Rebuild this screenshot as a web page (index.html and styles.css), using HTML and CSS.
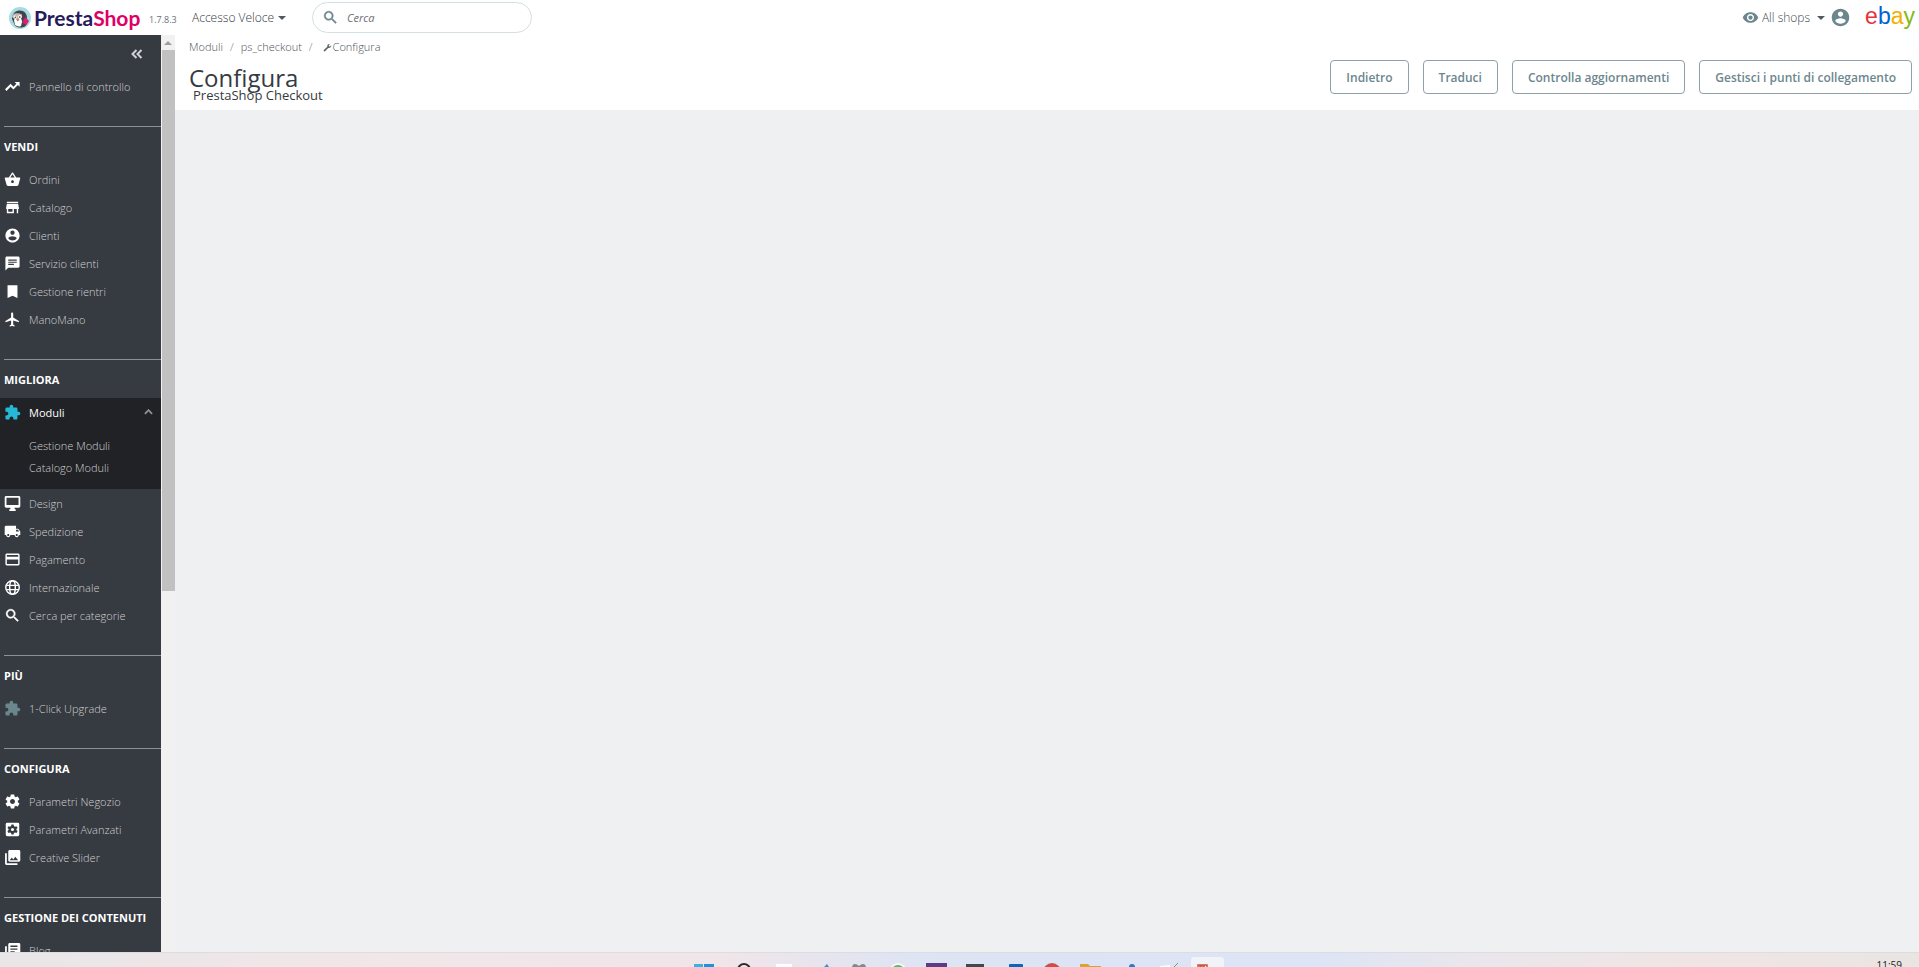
FILE: index.html
```html
<!DOCTYPE html>
<html lang="it">
<head>
<meta charset="utf-8">
<title>Configura - PrestaShop</title>
<link rel="stylesheet" href="styles.css">
</head>
<body>
<svg class="sprite" aria-hidden="true">
  <symbol id="trend" viewBox="0 0 24 24"><path d="M15 5.500l2.500 2.500-4.200 4.200-4-4L1.500 16l2 2.200 5.800-6 4 4 6.300-6.200 2.400 2.400V5.500z"/></symbol>
  <symbol id="basket" viewBox="0 0 24 24"><path d="M17.210 9l-4.380-6.560c-.19-.28-.51-.42-.83-.42-.32 0-.64.14-.83.43L6.790 9H2c-.55 0-1 .45-1 1 0 .09.010.18.040.27l2.540 9.270c.23.84 1 1.460 1.920 1.460h13c.92 0 1.690-.62 1.930-1.460l2.540-9.270L23 10c0-.55-.45-1-1-1h-4.790zM9 9l3-4.400L15 9H9zm3 8c-1.100 0-2-.9-2-2s.9-2 2-2 2 .9 2 2-.9 2-2 2z"/></symbol>
  <symbol id="store" viewBox="0 0 24 24"><path d="M20 4H4v2h16V4zm1 10v-2l-1-5H4l-1 5v2h1v6h10v-6h4v6h2v-6h1zm-9 4H6v-4h6v4z"/></symbol>
  <symbol id="person" viewBox="0 0 24 24"><path d="M12 2C6.480 2 2 6.480 2 12s4.480 10 10 10 10-4.480 10-10S17.520 2 12 2zm0 3c1.660 0 3 1.340 3 3s-1.340 3-3 3-3-1.340-3-3 1.340-3 3-3zm0 14.200c-2.500 0-4.710-1.280-6-3.220.03-1.990 4-3.080 6-3.080 1.990 0 5.970 1.090 6 3.080-1.290 1.940-3.500 3.220-6 3.220z"/></symbol>
  <symbol id="chat" viewBox="0 0 24 24"><path d="M20 2H4c-1.100 0-2 .9-2 2v18l4-4h14c1.100 0 2-.9 2-2V4c0-1.100-.9-2-2-2zM6 6.500h12V8H6V6.500zM6 9.500h12V11H6V9.500zm8 4.500H6v-1.500h8V14z"/></symbol>
  <symbol id="bookmark" viewBox="0 0 24 24"><path d="M19 3H5v18l7-3 7 3z"/></symbol>
  <symbol id="plane" viewBox="0 0 24 24"><path d="M21 16v-2l-8-5V3.500c0-.83-.67-1.500-1.500-1.500S10 2.670 10 3.500V9l-8 5v2l8-2.500V19l-2 1.500V22l3.500-1 3.500 1v-1.500L13 19v-5.500l8 2.500z"/></symbol>
  <symbol id="puzzle" viewBox="0 0 24 24"><path d="M20.500 11H19V7c0-1.100-.9-2-2-2h-4V3.500C13 2.120 11.880 1 10.500 1S8 2.120 8 3.500V5H4c-1.100 0-1.990.9-1.990 2v3.800H3.500c1.490 0 2.700 1.210 2.700 2.700s-1.210 2.700-2.700 2.700H2V20c0 1.100.9 2 2 2h3.800v-1.500c0-1.490 1.210-2.700 2.700-2.700 1.490 0 2.700 1.210 2.700 2.700V22H17c1.100 0 2-.9 2-2v-4h1.500c1.380 0 2.500-1.120 2.500-2.500S21.880 11 20.500 11z"/></symbol>
  <symbol id="monitor" viewBox="0 0 24 24"><path d="M21 1.500H3c-1.100 0-2 .9-2 2v12.500c0 1.100.9 2 2 2h6v2H7.500v2.500h9V20H15v-2h6c1.100 0 2-.9 2-2V3.500c0-1.100-.9-2-2-2zm-.500 12.500h-17V4h17v10z"/></symbol>
  <symbol id="truck" viewBox="0 0 24 24"><path d="M20 8h-3V4H3c-1.100 0-2 .9-2 2v11h2c0 1.660 1.340 3 3 3s3-1.340 3-3h6c0 1.660 1.340 3 3 3s3-1.340 3-3h2v-5l-3-4zM6 18.500c-.83 0-1.500-.67-1.500-1.500s.67-1.500 1.500-1.500 1.500.67 1.500 1.500-.67 1.500-1.500 1.500zm13.500-9l1.960 2.500H17V9.500h2.500zm-1.500 9c-.83 0-1.500-.67-1.500-1.500s.67-1.500 1.500-1.500 1.500.67 1.500 1.500-.67 1.500-1.500 1.500z"/></symbol>
  <symbol id="card" viewBox="0 0 24 24"><path d="M20 3.500H4c-1.110 0-1.990.89-1.990 2L2 18.500c0 1.110.89 2 2 2h16c1.110 0 2-.89 2-2v-13c0-1.110-.89-2-2-2zm0 15H4v-6.500h16v6.500zm0-10.500H4V5.500h16V8z"/></symbol>
  <symbol id="globe" viewBox="0 0 24 24"><g fill="none" stroke="currentColor" stroke-width="2"><circle cx="12" cy="12" r="9.500"/><ellipse cx="12" cy="12" rx="4" ry="9.500"/><path d="M3.500 9h17M3.500 15h17"/></g></symbol>
  <symbol id="search" viewBox="0 0 24 24"><path d="M15.500 14h-.79l-.28-.27C15.410 12.590 16 11.110 16 9.500 16 5.910 13.090 3 9.500 3S3 5.910 3 9.500 5.910 16 9.500 16c1.610 0 3.090-.59 4.230-1.570l.27.28v.79l5 4.990L20.490 19l-4.990-5zm-6 0C7.010 14 5 11.990 5 9.500S7.010 5 9.500 5 14 7.010 14 9.500 11.990 14 9.500 14z" stroke="currentColor" stroke-width=".6"/></symbol>
  <symbol id="gear" viewBox="0 0 24 24"><path d="M19.430 12.980c.04-.32.070-.64.070-.98s-.03-.66-.07-.98l2.110-1.650c.19-.15.240-.42.120-.64l-2-3.460c-.12-.22-.39-.3-.61-.22l-2.490 1c-.52-.4-1.080-.73-1.690-.98l-.38-2.650C14.460 2.180 14.250 2 14 2h-4c-.25 0-.46.18-.49.42l-.38 2.650c-.61.25-1.170.59-1.690.98l-2.490-1c-.23-.09-.49 0-.61.22l-2 3.460c-.13.22-.07.49.12.64l2.110 1.650c-.04.32-.07.65-.07.980s.03.66.07.98l-2.110 1.650c-.19.15-.24.42-.12.64l2 3.460c.12.22.39.3.61.22l2.490-1c.52.4 1.080.73 1.690.98l.38 2.650c.03.24.24.42.49.42h4c.25 0 .46-.18.490-.42l.38-2.650c.61-.25 1.170-.59 1.690-.98l2.490 1c.23.09.49 0 .61-.22l2-3.460c.12-.22.07-.49-.12-.64l-2.110-1.650zM12 15.500c-1.930 0-3.500-1.570-3.500-3.500s1.570-3.500 3.500-3.500 3.500 1.570 3.500 3.500-1.570 3.500-3.500 3.500z"/></symbol>
  <symbol id="gearbox" viewBox="0 0 24 24"><rect x="2.500" y="2.500" width="19" height="19" rx="2"/><path fill="#363a41" d="M10.500 5h3l.5 2.200 1.500.8 2.200-.7 1.500 2.600-1.700 1.500v1.300l1.700 1.500-1.500 2.600-2.200-.7-1.500.8-.5 2.100h-3l-.5-2.100-1.500-.8-2.200.7-1.500-2.600 1.700-1.500v-1.300L4.800 9.900l1.500-2.600 2.200.7 1.500-.8z"/><circle cx="12" cy="12" r="2.200"/></symbol>
  <symbol id="photos" viewBox="0 0 24 24"><path d="M23 16V3.500c0-1.100-.9-2-2-2H8c-1.100 0-2 .9-2 2V16c0 1.100.9 2 2 2h13c1.100 0 2-.9 2-2zm-12-4l2.030 2.710L16 11l4 5H8l3-4zM1.500 6v14.500c0 1.100.9 2 2 2H19V20H4V6H1.500z"/></symbol>
  <symbol id="library" viewBox="0 0 24 24"><path d="M4 6H1.500v14.500c0 1.100.9 2 2 2H19V20H4V6zm17-4.500H8c-1.100 0-2 .9-2 2V16c0 1.100.9 2 2 2h13c1.100 0 2-.9 2-2V3.500c0-1.100-.9-2-2-2zM19 11H9V9h10v2zm-4 4H9v-2h6v2zm4-8H9V5h10v2z"/></symbol>
  <symbol id="eye" viewBox="0 0 24 24"><path d="M12 4.500C7 4.500 2.730 7.610 1 12c1.730 4.390 6 7.500 11 7.500s9.270-3.110 11-7.500c-1.730-4.390-6-7.500-11-7.500zM12 17c-2.760 0-5-2.240-5-5s2.240-5 5-5 5 2.240 5 5-2.240 5-5 5zm0-8c-1.660 0-3 1.340-3 3s1.340 3 3 3 3-1.340 3-3-1.340-3-3-3z"/></symbol>
  <symbol id="wrench" viewBox="0 0 24 24"><path d="M2 18.500L11.500 10C10.300 5.500 14 1.500 18.500 2.500L15.500 6l.5 2.500 2.500.5L22 6c.5 4.500-3.500 8-8 7L5.500 22C3.500 23.500.5 20.500 2 18.500z"/></symbol>
</svg>

<header class="topbar">
  <a class="logo" href="#">
    <svg class="logo-mark" viewBox="0 0 22 22" aria-hidden="true">
      <circle cx="11" cy="11" r="11" fill="#a4dbe4"/>
      <path d="M3 12C3 6 7 3.500 11 3.500s7 3 7 7.500l-1 7.500c-3 2.800-8 2.800-11 0z" fill="#45434a"/>
      <path d="M5 13c1-2 3-3 5-2.500 2 .5 3 2 3 4.500l-1 4c-2 1-4 .5-6-1z" fill="#fff"/>
      <path d="M3 10c0-3 5-5 10-2.500l-.500 3-7 1.500z" fill="#c4b9b2"/>
      <circle cx="6" cy="10" r="1.600" fill="#fff"/><circle cx="11" cy="9.800" r="1.900" fill="#fff"/>
      <circle cx="6.200" cy="10.200" r=".7" fill="#222"/><circle cx="10.800" cy="10" r=".8" fill="#222"/>
      <path d="M7 12l2.500-1 1 2-2 1.500z" fill="#b98a6a"/>
      <path d="M16.500 10l3.500 4-2.500 4-4.500-2.500z" fill="#d9216f"/>
    </svg>
    <span class="logo-text">Presta<span class="logo-pink">Shop</span></span>
  </a>
  <span class="version">1.7.8.3</span>
  <button class="quick" type="button">Accesso Veloce <span class="caret"></span></button>
  <form class="search" role="search">
    <label for="q" aria-label="Cerca"><svg class="search-icon"><use href="#search"/></svg></label>
    <input id="q" type="text" placeholder="Cerca">
  </form>
  <div class="account">
    <button class="shops" type="button"><svg class="eye"><use href="#eye"/></svg>All shops <span class="caret"></span></button>
    <a class="user" href="#" aria-label="Profilo"><svg><use href="#person"/></svg></a>
    <a class="ebay" href="#"><span class="e">e</span><span class="b">b</span><span class="a">a</span><span class="y">y</span></a>
  </div>
</header>

<div class="workspace">
  <nav class="sidebar">
    <button class="collapse" type="button" aria-label="Comprimi menu"><svg viewBox="0 0 12 10"><path d="M5.500 1l-4 4 4 4M10.500 1l-4 4 4 4"/></svg></button>
    <a class="item" href="#"><svg><use href="#trend"/></svg>Pannello di controllo</a>

    <section class="group"><h2>VENDI</h2>
      <a class="item" href="#"><svg><use href="#basket"/></svg>Ordini</a>
      <a class="item" href="#"><svg><use href="#store"/></svg>Catalogo</a>
      <a class="item" href="#"><svg><use href="#person"/></svg>Clienti</a>
      <a class="item" href="#"><svg><use href="#chat"/></svg>Servizio clienti</a>
      <a class="item" href="#"><svg><use href="#bookmark"/></svg>Gestione rientri</a>
      <a class="item" href="#"><svg><use href="#plane"/></svg>ManoMano</a>
    </section>

    <section class="group"><h2>MIGLIORA</h2>
      <div class="open">
        <a class="item current" href="#"><svg><use href="#puzzle"/></svg>Moduli<svg class="chevron" viewBox="0 0 10 6"><path d="M1 5l4-4 4 4"/></svg></a>
        <div class="submenu">
          <a href="#">Gestione Moduli</a>
          <a href="#">Catalogo Moduli</a>
        </div>
      </div>
      <a class="item" href="#"><svg><use href="#monitor"/></svg>Design</a>
      <a class="item" href="#"><svg><use href="#truck"/></svg>Spedizione</a>
      <a class="item" href="#"><svg><use href="#card"/></svg>Pagamento</a>
      <a class="item" href="#"><svg><use href="#globe"/></svg>Internazionale</a>
      <a class="item" href="#"><svg><use href="#search"/></svg>Cerca per categorie</a>
    </section>

    <section class="group"><h2>PIÙ</h2>
      <a class="item muted" href="#"><svg><use href="#puzzle"/></svg>1-Click Upgrade</a>
    </section>

    <section class="group"><h2>CONFIGURA</h2>
      <a class="item" href="#"><svg><use href="#gear"/></svg>Parametri Negozio</a>
      <a class="item" href="#"><svg><use href="#gearbox"/></svg>Parametri Avanzati</a>
      <a class="item" href="#"><svg><use href="#photos"/></svg>Creative Slider</a>
    </section>

    <section class="group"><h2>GESTIONE DEI CONTENUTI</h2>
      <a class="item" href="#"><svg><use href="#library"/></svg>Blog</a>
    </section>
  </nav>
  <div class="scroll" aria-hidden="true"><span class="scroll-up"></span><span class="thumb"></span></div>

  <main class="main">
    <div class="page-head">
      <div class="heading">
        <ol class="crumbs">
          <li><a href="#">Moduli</a></li>
          <li><a href="#">ps_checkout</a></li>
          <li><svg><use href="#wrench"/></svg>Configura</li>
        </ol>
        <h1>Configura</h1>
        <p class="subtitle">PrestaShop Checkout</p>
      </div>
      <div class="actions">
        <button type="button">Indietro</button>
        <button type="button">Traduci</button>
        <button type="button">Controlla aggiornamenti</button>
        <button type="button">Gestisci i punti di collegamento</button>
      </div>
    </div>
  </main>
</div>

<footer class="taskbar">
  <svg class="apps" viewBox="0 0 540 15" aria-hidden="true">
    <path d="M4 11h9v4H4z" fill="#35b4e8"/><path d="M14 11h10v4H14z" fill="#1d94d8"/>
    <circle cx="54" cy="17" r="6" fill="none" stroke="#2b2b2b" stroke-width="2"/>
    <rect x="86" y="11" width="16" height="5" fill="#fff"/>
    <path d="M134 14l3-3 2 3z" fill="#3d8fd6"/>
    <path d="M162 15c0-5 4-5 7-2 3-3 7-3 7 2z" fill="#85878d"/>
    <circle cx="208" cy="19" r="9" fill="#f4fbf6"/><circle cx="208" cy="19" r="7" fill="#5cb870"/>
    <rect x="236" y="10" width="21" height="6" fill="#5a3d86"/>
    <rect x="276" y="11" width="18" height="5" fill="#44474b"/>
    <rect x="319" y="11" width="14" height="5" rx="1" fill="#0f66b8"/>
    <circle cx="362" cy="19" r="9" fill="#cf4e49"/>
    <path d="M390 11h8l2 2h11v3h-21z" fill="#d8a531"/>
    <circle cx="442" cy="14" r="3" fill="#2b78c4"/>
    <path d="M470 13l10-1v3h-10z" fill="#fff"/><path d="M484 14l4-4" stroke="#9b8c5e" stroke-width="1"/>
    <rect x="501" y="4" width="33" height="15" rx="3" fill="#f1f3f9"/>
    <path d="M508 15v-3h2v3m1 0v-3h2v3m1 0v-3h3v3" stroke="#c2573a" stroke-width="1.500" fill="none"/>
  </svg>
  <time class="clock">11:59</time>
</footer>
</body>
</html>
```
FILE: styles.css
```css
* { box-sizing: border-box; }
body {
  margin: 0;
  height: 100vh;
  display: flex;
  flex-direction: column;
  overflow: hidden;
  background: #eff0f2;
  color: #363a41;
  font-family: "Open Sans", "Noto Sans", sans-serif;
  font-size: 12px;
}
a { color: inherit; text-decoration: none; }
button { font: inherit; color: inherit; background: none; border: 0; padding: 0; }
svg { flex: none; fill: currentColor; }
.sprite { position: absolute; width: 0; height: 0; }

.topbar {
  flex: none;
  height: 35px;
  padding: 0 4px 0 9px;
  display: flex;
  align-items: center;
  background: #fff;
}
.logo { display: flex; align-items: center; gap: 3px; width: 140px; height: 35px; }
.logo-mark { width: 22px; height: 22px; }
.logo-text { font: 700 21px/28px Lato, sans-serif; color: #251b5b; }
.logo-pink { color: #df0067; }
.version { width: 43px; padding-top: 4px; font-size: 9px; color: #6c6f74; }
.quick { display: flex; align-items: center; gap: 4px; width: 120px; color: #363a41; font-weight: 300; }
.caret { border: 4px solid transparent; border-top-color: #4e5a60; border-bottom: 0; }
.search {
  display: flex;
  align-items: center;
  gap: 8px;
  width: 220px;
  height: 31px;
  padding: 0 9px;
  border: 1px solid #d3dfe3;
  border-radius: 16px;
}
.search label { display: flex; }
.search-icon { width: 17px; height: 17px; color: #6c868e; }
.search input { width: 160px; border: 0; padding: 0; outline: 0; background: none; font: italic 11px "Open Sans", sans-serif; }
.search input::placeholder { color: #6b6f74; opacity: 1; }
.account { margin-left: auto; display: flex; align-items: center; }
.shops { display: flex; align-items: center; gap: 3px; color: #44494f; font-weight: 300; }
.shops .caret { margin-left: 4px; }
.eye { width: 17px; height: 17px; color: #6c868e; }
.user { display: flex; margin: 0 14px 0 5px; color: #6c868e; }
.user svg { width: 21px; height: 21px; }
.ebay { font: 23px/28px "Liberation Sans", sans-serif; padding-bottom: 4px; }
.e { color: #e53238; }
.b { color: #0064d2; }
.a { color: #f5af02; }
.y { color: #86b817; }

.workspace { flex: 1; min-height: 0; display: flex; }
.sidebar { width: 161px; overflow: hidden; background: #363a41; color: #d0d0d0; }
.collapse { display: flex; justify-content: flex-end; align-items: center; width: 100%; height: 37px; padding-right: 18px; }
.collapse svg { width: 12px; height: 10px; fill: none; stroke: #d0d2d4; stroke-width: 2; }
.item { display: flex; align-items: center; height: 28px; padding: 0 8px 0 4px; gap: 8px; font-size: 11px; font-weight: 300; white-space: nowrap; }
.item svg { width: 17px; height: 17px; color: #fff; }
.group { margin-top: 26px; }
.group h2 { margin: 0 0 0 4px; padding-top: 1px; border-top: 1px solid #8d9095; color: #fff; font-size: 11px; font-weight: 700; line-height: 37px; white-space: nowrap; }
.open { background: #202226; padding-bottom: 10px; }
.item.current { color: #fff; font-weight: 400; }
.item.current svg { color: #25b9d7; }
.item.muted svg { color: #6c868e; }
.item .chevron { width: 9px; height: 6px; margin-left: auto; fill: none; stroke: #8f9296; stroke-width: 2; }
.submenu { padding: 9px 0 0 29px; font-size: 11px; font-weight: 300; line-height: 22px; }
.submenu a { display: block; }

.scroll { width: 14px; background: #f1f1f1; display: flex; flex-direction: column; align-items: stretch; }
.scroll-up { height: 15px; display: flex; align-items: center; justify-content: center; }
.scroll-up::before { content: ""; border: 4px solid transparent; border-top: 0; border-bottom-color: #9d9d9d; }
.thumb { height: 59%; margin-left: 1px; background: #c1c1c1; }

.main { flex: 1; }
.page-head { display: flex; justify-content: space-between; align-items: flex-start; height: 75px; padding: 0 7px 0 14px; background: #fff; }
.crumbs { display: flex; margin: 0; padding: 4px 0 0; list-style: none; font-size: 11px; font-weight: 300; line-height: 16px; color: #4c5157; }
.crumbs li { display: flex; align-items: center; }
.crumbs li + li::before { content: "/"; margin: 0 7px; color: #6c868e; }
.crumbs svg { width: 9px; height: 9px; margin: 0 1px 0 3px; color: #60666c; }
h1 { margin: 7px 0 0; font-size: 24px; font-weight: 400; line-height: 32px; }
.subtitle { margin: -8px 0 0 4px; font-size: 13px; line-height: 18px; }
.actions { display: flex; gap: 14px; padding-top: 25px; }
.actions button { height: 34px; padding: 0 15px; border: 1px solid #8ea1a7; border-radius: 4px; color: #6c868e; font-size: 12px; font-weight: 600; }

.taskbar {
  flex: none;
  position: relative;
  height: 15px;
  overflow: hidden;
  border-top: 1px solid #dcdde2;
  background: linear-gradient(90deg, #e9e6e7 0%, #f1e6e8 20%, #f0e5e9 38%, #dde4f4 48%, #dce4f6 68%, #e9e6ec 76%, #f0e5e4 88%, #e9e5e3 100%);
}
.apps { display: block; width: 540px; height: 15px; margin: 0 auto; }
.clock { position: absolute; right: 17px; top: 5px; color: #222; font-size: 10px; line-height: 14px; }
```
